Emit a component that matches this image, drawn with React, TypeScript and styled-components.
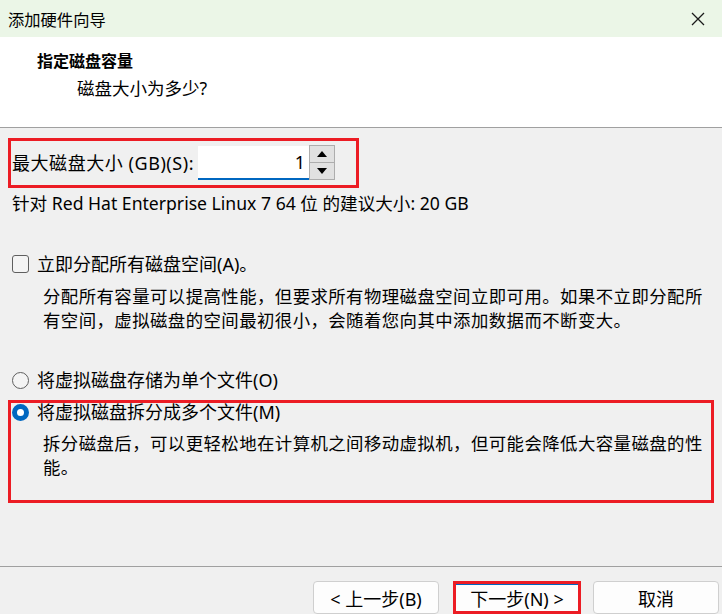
import React from "react";
import styled, { createGlobalStyle } from "styled-components";

const Global = createGlobalStyle`
  html, body { margin: 0; padding: 0; }
  body {
    background: #f0f0f0;
    font-family: "Noto Sans", "Noto Sans CJK SC", sans-serif;
    color: #000;
  }
`;

const Window = styled.div`
  width: 722px;
  height: 614px;
  display: flex;
  flex-direction: column;
  background: #f0f0f0;
  overflow: hidden;
`;

const TitleBar = styled.div`
  flex: none;
  height: 37px;
  background: #ebf6e7;
  display: flex;
  align-items: center;
  justify-content: space-between;
  padding: 0 17px 0 8px;
  font-size: 16.3px;
  font-family: "Noto Sans CJK SC", sans-serif;
`;

const CloseIcon = styled.svg`
  width: 14px;
  height: 14px;
  display: block;
`;

const Header = styled.div`
  flex: none;
  height: 78px;
  background: #fff;
  border-bottom: 1px solid #a0a0a0;
  padding: 12px 0 0 37px;
  display: flex;
  flex-direction: column;
  gap: 6px;
`;

const HeaderTitle = styled.div`
  font-family: "Noto Sans CJK SC", sans-serif;
  font-weight: 700;
  font-size: 16px;
  line-height: 22px;
`;

const HeaderSub = styled.div`
  font-size: 17.5px;
  line-height: 22px;
  margin-left: 40px;
`;

const Content = styled.div`
  flex: 1;
  display: flex;
  flex-direction: column;
  padding: 10px 8px 0 8px;
  font-size: 18px;
`;

const Section = styled.div<{ $marked?: boolean; $mt?: number; $pb?: number; $fit?: boolean }>`
  border: 3px solid ${(p) => (p.$marked ? "#ec1c24" : "transparent")};
  padding: 0 0 ${(p) => p.$pb ?? 0}px 1px;
  margin-top: ${(p) => p.$mt ?? 0}px;
  display: flex;
  flex-direction: column;
  align-self: ${(p) => (p.$fit ? "flex-start" : "stretch")};
`;

const SizeRow = styled.div`
  width: 344px;
  height: 44px;
  display: flex;
  align-items: center;
  gap: 4px;
`;

const Label = styled.span`
  font-size: 18px;
  letter-spacing: 0.55px;
  line-height: 24px;
  white-space: nowrap;
`;

const InputWrap = styled.div`
  display: flex;
  align-items: center;
`;

const NumberInput = styled.div`
  width: 107px;
  height: 32px;
  background: #fff;
  border-bottom: 2px solid #0067c0;
  display: flex;
  align-items: center;
  justify-content: flex-end;
  padding-right: 4px;
  font-size: 18px;
`;

const Spinner = styled.div`
  width: 26px;
  height: 35px;
  display: flex;
  flex-direction: column;
  margin-top: -1px;
`;

const SpinButton = styled.div`
  flex: 1;
  background: #e1e1e1;
  border: 1px solid #adadad;
  display: flex;
  align-items: center;
  justify-content: center;
  & + & { border-top: none; }
`;

const Recommend = styled.div`
  font-size: 17.6px;
  line-height: 24px;
  margin: 3px 0 0 4px;
`;

const OptionRow = styled.label<{ $lh?: number }>`
  display: flex;
  align-items: center;
  gap: 8px;
  line-height: ${(p) => p.$lh ?? 24}px;
  font-size: 18px;
`;

const CheckBox = styled.span`
  width: 15px;
  height: 16px;
  border: 1px solid #5f5f5f;
  border-radius: 3px;
  background: #f4f4f4;
  flex: none;
`;

const Radio = styled.span<{ $checked?: boolean }>`
  width: 17px;
  height: 17px;
  box-sizing: border-box;
  border-radius: 50%;
  flex: none;
  border: ${(p) => (p.$checked ? "5px solid #0067c0" : "1px solid #5f5f5f")};
  background: ${(p) => (p.$checked ? "#fff" : "#f4f4f4")};
`;

const Description = styled.p<{ $mt?: number }>`
  margin: ${(p) => p.$mt ?? 8}px 0 0 31px;
  width: 668px;
  font-size: 17.4px;
  letter-spacing: 0.44px;
  line-height: 24px;
  font-family: "Noto Sans CJK SC", sans-serif;
`;

const Spacer = styled.div`
  flex: 1;
`;

const Footer = styled.div`
  flex: none;
  height: 48px;
  border-top: 1px solid #a0a0a0;
  display: flex;
  align-items: flex-start;
  justify-content: flex-end;
  gap: 12px;
  padding: 14px 3px 0 0;
  box-sizing: border-box;
`;

const Button = styled.button<{ $marked?: boolean }>`
  width: 126px;
  height: 33px;
  background: #fdfdfd;
  border: 1px solid #cfcfcf;
  border-radius: 4px;
  font-family: "Noto Sans", "Noto Sans CJK SC", sans-serif;
  font-size: 18px;
  color: #000;
  padding: 0;
  display: flex;
  align-items: center;
  justify-content: center;
  ${(p) =>
    p.$marked &&
    `
    width: 128px;
    margin-left: 2px;
    border: 3px solid #ec1c24;
    border-radius: 0;
    box-shadow: inset 0 1px 0 #0067c0;
  `}
`;

export default function App() {
  return (
    <>
      <Global />
      <Window>
        <TitleBar>
          <span>添加硬件向导</span>
          <CloseIcon viewBox="0 0 14 14">
            <path d="M1 1 L13 13 M13 1 L1 13" stroke="#1a1a1a" strokeWidth="1.3" fill="none" />
          </CloseIcon>
        </TitleBar>
        <Header>
          <HeaderTitle>指定磁盘容量</HeaderTitle>
          <HeaderSub>磁盘大小为多少?</HeaderSub>
        </Header>
        <Content>
          <Section $marked $fit>
            <SizeRow>
              <Label>最大磁盘大小 (GB)(S):</Label>
              <InputWrap>
                <NumberInput>1</NumberInput>
                <Spinner>
                  <SpinButton>
                    <svg width="10" height="6" viewBox="0 0 10 6">
                      <path d="M0 6 L5 0 L10 6 Z" fill="#000" />
                    </svg>
                  </SpinButton>
                  <SpinButton>
                    <svg width="10" height="6" viewBox="0 0 10 6">
                      <path d="M0 0 L5 6 L10 0 Z" fill="#000" />
                    </svg>
                  </SpinButton>
                </Spinner>
              </InputWrap>
            </SizeRow>
          </Section>
          <Recommend>针对 Red Hat Enterprise Linux 7 64 位 的建议大小: 20 GB</Recommend>

          <Section $mt={34}>
            <OptionRow>
              <CheckBox />
              立即分配所有磁盘空间(A)。
            </OptionRow>
            <Description>
              分配所有容量可以提高性能，但要求所有物理磁盘空间立即可用。如果不立即分配所有空间，虚拟磁盘的空间最初很小，会随着您向其中添加数据而不断变大。
            </Description>
          </Section>

          <Section $mt={30}>
            <OptionRow>
              <Radio />
              将虚拟磁盘存储为单个文件(O)
            </OptionRow>
          </Section>

          <Section $marked $mt={5} $pb={21}>
            <OptionRow $lh={18}>
              <Radio $checked />
              将虚拟磁盘拆分成多个文件(M)
            </OptionRow>
            <Description $mt={10}>
              拆分磁盘后，可以更轻松地在计算机之间移动虚拟机，但可能会降低大容量磁盘的性能。
            </Description>
          </Section>
          <Spacer />
        </Content>
        <Footer>
          <Button>&lt; 上一步(B)</Button>
          <Button $marked>下一步(N) &gt;</Button>
          <Button>取消</Button>
        </Footer>
      </Window>
    </>
  );
}
